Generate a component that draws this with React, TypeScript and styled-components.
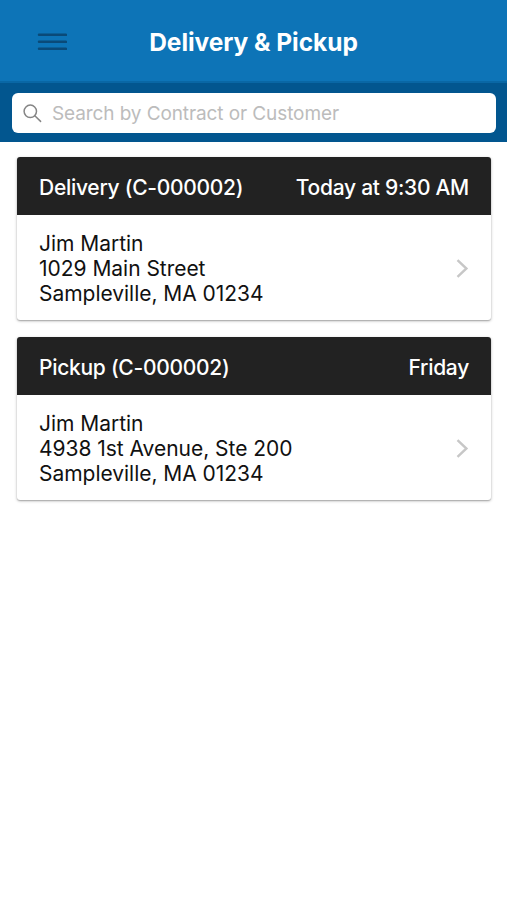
import React from "react";
import styled, { createGlobalStyle } from "styled-components";

const GlobalStyle = createGlobalStyle`
  *, *::before, *::after { box-sizing: border-box; }
  body {
    margin: 0;
    background: #fff;
    color: #111;
    font-family: Inter, "Liberation Sans", sans-serif;
  }
`;

const Screen = styled.div`
  min-height: 900px;
  background: #fff;
`;

const TitleBar = styled.header`
  display: grid;
  grid-template-columns: 104px 1fr 104px;
  align-items: center;
  height: 83px;
  background: #0d74b7;
  border-bottom: 2px solid #0967a5;
`;

const MenuButton = styled.button`
  display: flex;
  margin: 2px 0 0 37px;
  padding: 0;
  width: 30px;
  border: 0;
  background: none;
  color: #0a4a78;
`;

const Title = styled.h1`
  margin: 2px 0 0;
  color: #fff;
  font-size: 24.5px;
  font-weight: 700;
  line-height: 30px;
  letter-spacing: -0.05px;
  text-align: center;
  white-space: nowrap;
`;

const SearchBar = styled.div`
  height: 59px;
  padding: 10px 11px 9px 12px;
  background: #02568f;
`;

const SearchField = styled.label`
  display: flex;
  align-items: center;
  height: 40px;
  padding-left: 11px;
  gap: 10px;
  border-radius: 6px;
  background: #fff;
  color: #858585;
`;

const SearchInput = styled.input`
  flex: 1;
  min-width: 0;
  padding: 2px 0 0;
  border: 0;
  outline: 0;
  background: transparent;
  color: #111;
  font: 400 19px/24px Inter, "Liberation Sans", sans-serif;
  letter-spacing: -0.1px;
  &::placeholder { color: #bcbcbc; opacity: 1; }
`;

const List = styled.main`
  display: flex;
  flex-direction: column;
  gap: 17px;
  padding: 15px 16px 0 17px;
`;

const Card = styled.article`
  height: 163px;
  border-radius: 3px;
  background: #fff;
  box-shadow: 0 1px 1px rgba(0, 0, 0, 0.14), 0 1px 3px rgba(0, 0, 0, 0.3);
  overflow: hidden;
`;

const CardHeader = styled.div`
  display: flex;
  align-items: center;
  justify-content: space-between;
  height: 58px;
  padding: 3px 22px 0;
  background: #222;
  color: #fff;
  font-size: 21px;
  font-weight: 500;
  line-height: 25px;
  letter-spacing: -0.28px;
`;

const CardBody = styled.div`
  display: flex;
  align-items: center;
  justify-content: space-between;
  height: 105px;
  padding: 1px 22px 0;
`;

const Address = styled.address`
  margin-top: 1px;
  color: #111;
  font-size: 21px;
  font-style: normal;
  line-height: 25px;
  letter-spacing: -0.03px;
`;

const MenuIcon = () => (
  <svg width="30" height="18" viewBox="0 0 30 18" fill="none" stroke="currentColor" strokeWidth="2.5" strokeLinecap="round">
    <path d="M2 1.8h27M2 8.8h27M2 15.8h27" />
  </svg>
);

const SearchIcon = () => (
  <svg width="19" height="19" viewBox="0 0 19 19" fill="none" stroke="currentColor" strokeWidth="1.5" strokeLinecap="round">
    <circle cx="7.3" cy="7.3" r="6.2" />
    <path d="M11.8 11.8l5.8 5.6" />
  </svg>
);

const ChevronIcon = () => (
  <svg width="13" height="19" viewBox="0 0 13 19" fill="none" stroke="#c7c7c7" strokeWidth="2.4">
    <path d="M1.5 1.2l8.9 8.3-8.9 8.3" />
  </svg>
);

const jobs = [
  { title: "Delivery (C-000002)", when: "Today at 9:30 AM", lines: ["Jim Martin", "1029 Main Street", "Sampleville, MA 01234"] },
  { title: "Pickup (C-000002)", when: "Friday", lines: ["Jim Martin", "4938 1st Avenue, Ste 200", "Sampleville, MA 01234"] },
];

export default function App() {
  return (
    <Screen>
      <GlobalStyle />
      <TitleBar>
        <MenuButton aria-label="Menu"><MenuIcon /></MenuButton>
        <Title>Delivery &amp; Pickup</Title>
      </TitleBar>
      <SearchBar>
        <SearchField>
          <SearchIcon />
          <SearchInput placeholder="Search by Contract or Customer" />
        </SearchField>
      </SearchBar>
      <List>
        {jobs.map((job) => (
          <Card key={job.title}>
            <CardHeader>
              <span>{job.title}</span>
              <span>{job.when}</span>
            </CardHeader>
            <CardBody>
              <Address>
                {job.lines.map((line) => <div key={line}>{line}</div>)}
              </Address>
              <ChevronIcon />
            </CardBody>
          </Card>
        ))}
      </List>
    </Screen>
  );
}
